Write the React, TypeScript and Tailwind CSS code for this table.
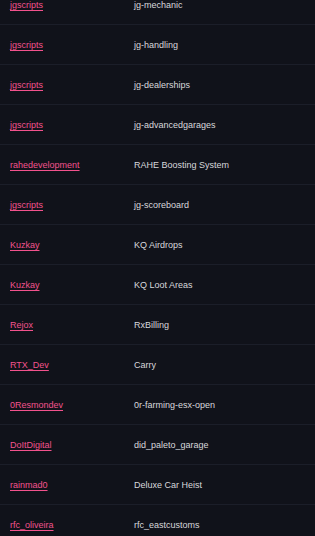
import React from "react";

const rows: [string, string][] = [
  ["jgscripts", "jg-mechanic"],
  ["jgscripts", "jg-handling"],
  ["jgscripts", "jg-dealerships"],
  ["jgscripts", "jg-advancedgarages"],
  ["rahedevelopment", "RAHE Boosting System"],
  ["jgscripts", "jg-scoreboard"],
  ["Kuzkay", "KQ Airdrops"],
  ["Kuzkay", "KQ Loot Areas"],
  ["Rejox", "RxBilling"],
  ["RTX_Dev", "Carry"],
  ["0Resmondev", "0r-farming-esx-open"],
  ["DoItDigital", "did_paleto_garage"],
  ["rainmad0", "Deluxe Car Heist"],
  ["rfc_oliveira", "rfc_eastcustoms"],
];

export default function App() {
  return (
    <div
      className="w-[315px] h-[536px] overflow-hidden bg-[#10121a]"
      style={{ fontFamily: '"Liberation Sans", Arial, sans-serif' }}
    >
      <div className="-mt-[15px]">
        {rows.map(([a, b], i) => (
          <div
            key={i}
            className="flex items-center h-[40px] border-b border-[#1b1e29] text-[9px] leading-[12px]"
          >
            <div className="w-[134px] pl-[10px] shrink-0 flex items-center">
              <a
                href="#"
                className="text-[#f2528d] underline underline-offset-2"
              >
                {a}
              </a>
            </div>
            <div className="text-[#d8d8dc]">{b}</div>
          </div>
        ))}
      </div>
    </div>
  );
}
